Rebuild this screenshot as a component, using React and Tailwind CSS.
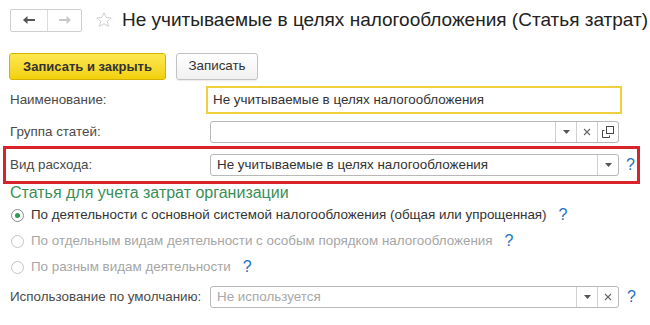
import React from "react";

function Help() {
  return <span className="text-[16px] leading-none text-[#2370c0]">?</span>;
}

function Triangle() {
  return (
    <svg width="7" height="4" viewBox="0 0 7 4">
      <path d="M0 0 H7 L3.5 4 Z" fill="#555" />
    </svg>
  );
}

function Cross() {
  return (
    <svg width="8" height="8" viewBox="0 0 8 8">
      <path d="M1 1 L7 7 M7 1 L1 7" stroke="#666" strokeWidth="1.1" />
    </svg>
  );
}

function OpenIcon() {
  return (
    <svg width="12" height="12" viewBox="0 0 12 12">
      <rect x="4.5" y="0.5" width="7" height="7" fill="none" stroke="#444" />
      <path d="M2.5 4.5 H0.5 V11.5 H7.5 V9.5" fill="none" stroke="#444" />
    </svg>
  );
}

function Field({ text, placeholder, buttons, className = "" }) {
  return (
    <div
      className={
        "flex h-[22px] w-[409px] items-stretch rounded-[3px] border border-[#b8b8b8] bg-white " +
        className
      }
    >
      <div
        className={
          "flex flex-1 items-center px-[6px] text-[13.4px] " +
          (placeholder ? "text-[#a8a8a8]" : "text-[#333]")
        }
      >
        {text || placeholder}
      </div>
      {buttons.map((b, i) => (
        <div
          key={i}
          className="flex w-[21px] items-center justify-center border-l border-[#d0d0d0]"
        >
          {b === "drop" && <Triangle />}
          {b === "clear" && <Cross />}
          {b === "open" && <OpenIcon />}
        </div>
      ))}
    </div>
  );
}

function Radio({ checked, disabled, label }) {
  return (
    <div className="flex h-[26px] items-center pl-[11px]">
      <div
        className={
          "flex h-[13px] w-[13px] items-center justify-center rounded-full border bg-white " +
          (disabled ? "border-[#c4c4c4]" : "border-[#8c8c8c]")
        }
      >
        {checked && <div className="h-[5px] w-[5px] rounded-full bg-[#2f9a5a]" />}
      </div>
      <span
        className={
          "ml-[7px] text-[13.4px] " + (disabled ? "text-[#a6a6a6]" : "text-[#333]")
        }
      >
        {label}
      </span>
      <span className="ml-[12px]">
        <Help />
      </span>
    </div>
  );
}

export default function App() {
  return (
    <div
      className="relative h-[325px] w-[650px] overflow-hidden bg-white text-[#333]"
      style={{ fontFamily: '"Liberation Sans", Arial, sans-serif' }}
    >
      {/* header */}
      <div className="flex items-center pl-[10px] pt-[8px]">
        <div className="flex h-[23px] w-[72px] rounded-[2px] border border-[#cfcfcf] bg-white">
          <div className="flex w-[37px] items-center justify-center border-r border-[#dcdcdc]">
            <svg width="12" height="8" viewBox="0 0 12 8">
              <path d="M0 4 L4.5 0 V3 H12 V5 H4.5 V8 Z" fill="#555" />
            </svg>
          </div>
          <div className="flex flex-1 items-center justify-center">
            <svg width="12" height="8" viewBox="0 0 12 8">
              <path d="M12 4 L7.5 0 V3 H0 V5 H7.5 V8 Z" fill="#c8c8c8" />
            </svg>
          </div>
        </div>
        <svg width="16" height="16" viewBox="0 0 16 16" className="ml-[14px]">
          <path
            d="M8 0.8 L10.1 5.4 L15.2 5.9 L11.4 9.3 L12.5 14.4 L8 11.8 L3.5 14.4 L4.6 9.3 L0.8 5.9 L5.9 5.4 Z"
            fill="none"
            stroke="#c9c9c9"
            strokeWidth="0.9"
            strokeLinejoin="round"
          />
        </svg>
        <div className="ml-[10px] text-[19px] leading-[24px] text-[#222]">
          Не учитываемые в целях налогообложения (Статья затрат)
        </div>
      </div>

      {/* buttons */}
      <div className="mt-[21px] flex gap-[10px] pl-[9px]">
        <button className="h-[27px] w-[157px] rounded-[3px] border border-[#d4b300] bg-linear-to-b from-[#fde84e] to-[#f3d000] text-[13px] font-bold text-[#333]">
          Записать и закрыть
        </button>
        <button className="h-[27px] w-[82px] rounded-[3px] border border-[#c2c2c2] bg-linear-to-b from-white to-[#f1f1f1] text-[13.4px] text-[#333] shadow-[0_1px_1px_rgba(0,0,0,0.08)]">
          Записать
        </button>
      </div>

      {/* Наименование */}
      <div className="mt-[6px] flex h-[28px] items-center pl-[10px]">
        <div className="w-[196px] text-[13.4px] text-[#4a4a4a]">Наименование:</div>
        <div className="flex h-[28px] w-[416px] items-center border-2 border-[#f0cf3c] bg-white pl-[5px] text-[13.4px] text-[#333]">
          Не учитываемые в целях налогообложения
        </div>
      </div>

      {/* Группа статей */}
      <div className="mt-[7px] flex items-center pl-[10px]">
        <div className="w-[200px] text-[13.4px] text-[#4a4a4a]">Группа статей:</div>
        <Field text="" buttons={["drop", "clear", "open"]} />
      </div>

      {/* Вид расхода */}
      <div className="ml-[3px] mt-[3px] flex h-[38px] w-[637px] items-center border-[3px] border-[#d8232a] pl-[4px]">
        <div className="w-[200px] text-[13.4px] text-[#4a4a4a]">Вид расхода:</div>
        <Field text="Не учитываемые в целях налогообложения" buttons={["drop"]} />
        <span className="ml-[7px]">
          <Help />
        </span>
      </div>

      {/* section */}
      <div className="pl-[10px] text-[16px] leading-[18px] text-[#3a8f58]">
        Статья для учета затрат организации
      </div>
      <Radio
        checked
        label="По деятельности с основной системой налогообложения (общая или упрощенная)"
      />
      <Radio disabled label="По отдельным видам деятельности с особым порядком налогообложения" />
      <Radio disabled label="По разным видам деятельности" />

      {/* Использование */}
      <div className="mt-[5px] flex items-center pl-[10px]">
        <div className="w-[200px] text-[13.4px] text-[#4a4a4a]">Использование по умолчанию:</div>
        <Field placeholder="Не используется" buttons={["drop", "clear"]} />
        <span className="ml-[8px]">
          <Help />
        </span>
      </div>
    </div>
  );
}
